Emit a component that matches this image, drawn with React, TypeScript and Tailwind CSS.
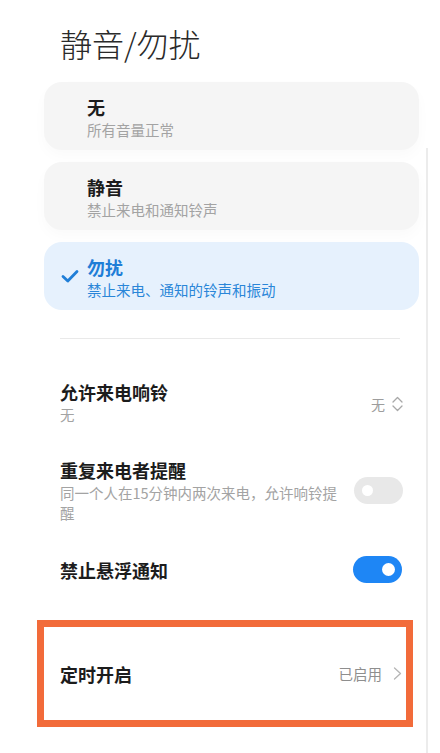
import React from "react";

const FONT = "font-['Noto_Sans_CJK_SC','Noto_Sans',sans-serif]";

function Card({
  title,
  sub,
  selected,
}: {
  title: string;
  sub: string;
  selected?: boolean;
}) {
  return (
    <div
      className={`relative h-[68px] rounded-[18px] pl-[43px] pt-[13px] ${
        selected
          ? "bg-[#e6f1fd]"
          : "bg-[#f5f5f5] shadow-[0_6px_14px_rgba(0,0,0,0.025)]"
      }`}
    >
      {selected && (
        <svg
          className="absolute left-[17px] top-[27px]"
          width="18"
          height="14"
          viewBox="0 0 18 14"
          fill="none"
        >
          <path
            d="M2 7.5 L6.8 12 L16 2.5"
            stroke="#1f7ed7"
            strokeWidth="2.8"
            strokeLinecap="round"
            strokeLinejoin="round"
          />
        </svg>
      )}
      <div
        className={`text-[18px] leading-[25px] font-bold ${
          selected ? "text-[#1f7ed7]" : "text-[#1c1c1c]"
        }`}
      >
        {title}
      </div>
      <div
        className={`text-[14.5px] leading-[20px] ${
          selected ? "text-[#2a86d8]" : "text-[#a3a3a3]"
        }`}
      >
        {sub}
      </div>
    </div>
  );
}

function Toggle({ on }: { on?: boolean }) {
  return (
    <div
      className={`relative w-[49px] h-[27px] rounded-full shrink-0 ${
        on ? "bg-[#1e86f5]" : "bg-[#e8e8e8]"
      }`}
    >
      {on ? (
        <div className="absolute right-[7px] top-[7px] w-[13px] h-[13px] rounded-full bg-white" />
      ) : (
        <div className="absolute left-[8px] top-[8px] w-[11px] h-[11px] rounded-full bg-white" />
      )}
    </div>
  );
}

export default function App() {
  return (
    <div className={`relative w-[440px] h-[753px] overflow-hidden bg-white ${FONT}`}>
      {/* scrollbar line */}
      <div className="absolute left-[426px] top-[148px] w-[2px] h-[605px] bg-[#ececec]" />

      <div className="pl-[60px] pt-[23px] text-[32px] leading-[40px] font-light text-[#2a2a2a]">
        静音/勿扰
      </div>

      <div className="mt-[19px] pl-[44px] pr-[21px] flex flex-col gap-[12px]">
        <Card title="无" sub="所有音量正常" />
        <Card title="静音" sub="禁止来电和通知铃声" />
        <Card title="勿扰" sub="禁止来电、通知的铃声和振动" selected />
      </div>

      <div className="mt-[28px] ml-[60px] w-[340px] h-px bg-[#e9e9e9]" />

      {/* 允许来电响铃 */}
      <div className="mt-[40px] pl-[60px] pr-[37px] flex items-center">
        <div className="flex-1">
          <div className="text-[18px] leading-[26px] font-bold text-[#1c1c1c]">允许来电响铃</div>
          <div className="text-[14.5px] leading-[20px] text-[#a3a3a3]">无</div>
        </div>
        <div className="flex items-center gap-[7px] text-[14px] text-[#9d9d9d] pt-[4px]">
          <span>无</span>
          <svg width="11" height="16" viewBox="0 0 11 16" fill="none">
            <path
              d="M1 6 L5.5 1.5 L10 6 M1 10 L5.5 14.5 L10 10"
              stroke="#a8a8a8"
              strokeWidth="1.3"
              strokeLinecap="round"
              strokeLinejoin="round"
            />
          </svg>
        </div>
      </div>

      {/* 重复来电者提醒 */}
      <div className="mt-[32px] pl-[60px] pr-[38px] flex items-center gap-[10px]">
        <div className="flex-1">
          <div className="text-[18px] leading-[26px] font-bold text-[#1c1c1c]">重复来电者提醒</div>
          <div className="text-[14.5px] leading-[20px] text-[#a3a3a3] w-[284px]">
            同一个人在15分钟内两次来电，允许响铃提醒
          </div>
        </div>
        <Toggle />
      </div>

      {/* 禁止悬浮通知 */}
      <div className="mt-[33px] pl-[60px] pr-[38px] flex items-center">
        <div className="flex-1 text-[18px] leading-[26px] font-bold text-[#1c1c1c]">禁止悬浮通知</div>
        <Toggle on />
      </div>

      {/* 定时开启 */}
      <div className="mt-[37px] ml-[37px] w-[376px] h-[107px] border-[7px] border-[#f26b3a] flex items-center pl-[16px] pr-[4px]">
        <div className="flex-1 text-[18px] leading-[26px] font-bold text-[#1c1c1c]">定时开启</div>
        <div className="flex items-center gap-[11px] text-[14.5px] text-[#8e8e8e]">
          <span>已启用</span>
          <svg width="9" height="13" viewBox="0 0 9 13" fill="none">
            <path
              d="M1.5 1 L7.5 6.5 L1.5 12"
              stroke="#b5b5b5"
              strokeWidth="1.3"
              strokeLinecap="round"
              strokeLinejoin="round"
            />
          </svg>
        </div>
      </div>
    </div>
  );
}
